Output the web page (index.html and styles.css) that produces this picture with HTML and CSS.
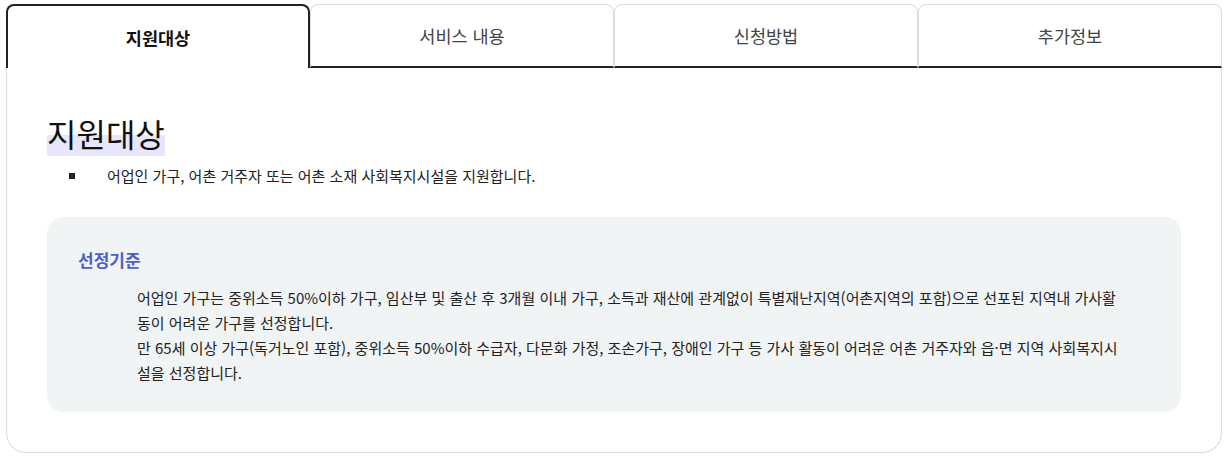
FILE: index.html
```
<!DOCTYPE html>
<html lang="ko">
<head>
<meta charset="utf-8">
<link rel="stylesheet" href="styles.css">
</head>
<body>
<div class="wrap">
  <div class="tabs">
    <div class="tab active">지원대상</div>
    <div class="tab">서비스 내용</div>
    <div class="tab">신청방법</div>
    <div class="tab">추가정보</div>
  </div>
  <div class="panel">
    <h2 class="title"><span class="hl">지원대상</span></h2>
    <ul class="list">
      <li>어업인 가구, 어촌 거주자 또는 어촌 소재 사회복지시설을 지원합니다.</li>
    </ul>
    <div class="box">
      <div class="box-title">선정기준</div>
      <p class="box-text">어업인 가구는 중위소득 50%이하 가구, 임산부 및 출산 후 3개월 이내 가구, 소득과 재산에 관계없이 특별재난지역(어촌지역의 포함)으로 선포된 지역내 가사활동이 어려운 가구를 선정합니다.<br>만 65세 이상 가구(독거노인 포함), 중위소득 50%이하 수급자, 다문화 가정, 조손가구, 장애인 가구 등 가사 활동이 어려운 어촌 거주자와 읍·면 지역 사회복지시설을 선정합니다.</p>
    </div>
  </div>
</div>
</body>
</html>
```
FILE: styles.css
```
* { box-sizing: border-box; }
html, body { background: #fff; }
body {
  margin: 4px 6px 0;
  font-family: "Noto Sans CJK KR", "Noto Sans", sans-serif;
  color: #222;
}
.wrap { width: 1216px; }
.tabs {
  display: grid;
  grid-template-columns: repeat(4, 1fr);
}
.tab {
  height: 64px;
  display: flex;
  align-items: center;
  justify-content: center;
  font-size: 17.5px;
  color: #444;
  border: 1px solid #ddd;
  border-bottom: 2px solid #222;
  border-radius: 8px 8px 0 0;
  background: #fff;
}
.tab.active {
  border: 2px solid #222;
  border-bottom: none;
  font-weight: 700;
  color: #111;
}
.panel {
  border: 1px solid #ddd;
  border-top: none;
  border-radius: 0 0 20px 20px;
  padding: 43px 40px 0;
  height: 385px;
}
.title {
  margin: 0;
  font-size: 32px;
  font-weight: 400;
  line-height: 44px;
  color: #111;
}
.hl {
  background: linear-gradient(transparent 55%, #e8e6fa 55%);
}
.list {
  list-style: none;
  margin: 8px 0 0;
  padding: 0;
}
.list li {
  position: relative;
  padding-left: 60px;
  font-size: 15px;
  line-height: 25px;
}
.list li::before {
  content: "";
  position: absolute;
  left: 22px;
  top: 10px;
  width: 6px;
  height: 6px;
  background: #222;
}
.box {
  margin-top: 29px;
  background: #f1f4f5;
  border-radius: 16px;
  padding: 30px 59px 27px 31px;
}
.box-title {
  font-size: 17px;
  font-weight: 700;
  color: #4a5fd6;
  line-height: 26px;
}
.box-text {
  margin: 12px 0 0 59px;
  font-size: 15px;
  line-height: 25px;
}
```
